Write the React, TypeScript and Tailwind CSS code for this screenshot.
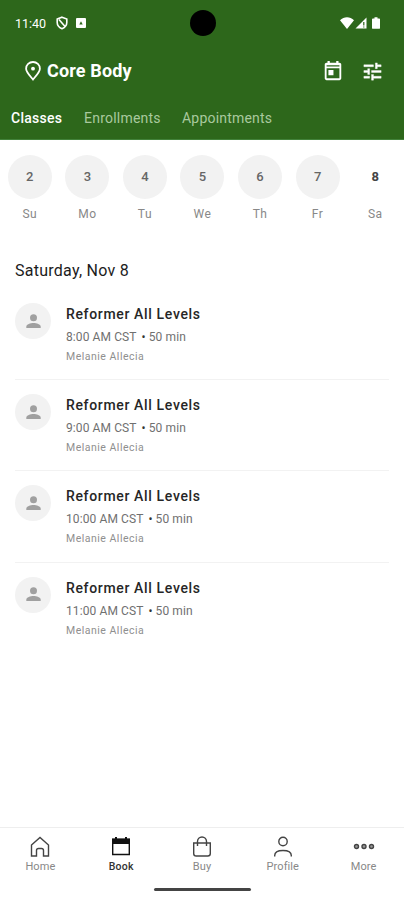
import type { ReactNode } from 'react';

interface ClassItem {
  name: string;
  time: string;
  duration: string;
  instructor: string;
}

const days = [
  { date: '2', label: 'Su' },
  { date: '3', label: 'Mo' },
  { date: '4', label: 'Tu' },
  { date: '5', label: 'We' },
  { date: '6', label: 'Th' },
  { date: '7', label: 'Fr' },
  { date: '8', label: 'Sa' },
];

const classes: ClassItem[] = ['8:00', '9:00', '10:00', '11:00'].map((t) => ({
  name: 'Reformer All Levels',
  time: `${t} AM CST`,
  duration: '50 min',
  instructor: 'Melanie Allecia',
}));

function StatusBar() {
  return (
    <div className="relative flex h-[46px] items-center justify-between pl-[15px] pr-[24px] text-white">
      <div className="flex items-center">
        <span className="w-[32px] whitespace-nowrap pt-px text-[12.5px] leading-4">11:40</span>
        <svg className="ml-[9px]" width="12" height="14" viewBox="0 0 12 14" fill="none" stroke="currentColor" strokeWidth="1.6">
          <path d="M6 1.2 10.8 3v3.6c0 2.9-2 5-4.8 6.1C3.2 11.6 1.2 9.5 1.2 6.6V3z" />
          <path d="m3 3.5 6 7" />
        </svg>
        <svg className="ml-[8px]" width="10" height="10" viewBox="0 0 10 10">
          <rect width="10" height="10" rx="1" fill="currentColor" />
          <path d="M5 3.2 6.7 6.5H3.3z" fill="#2d671b" />
        </svg>
      </div>
      <div className="flex items-center">
        <svg width="14" height="12" viewBox="0 0 14 12" fill="currentColor">
          <path d="M0 3.2C4-.7 10-.7 14 3.2L7 12z" />
        </svg>
        <svg className="ml-px" width="12" height="12" viewBox="0 0 12 12">
          <path d="M11.5.5v11H.5z" fill="currentColor" />
          <path d="M8.800 5v3.500M8.800 9.500v1" stroke="#2d671b" strokeWidth="1.2" />
        </svg>
        <svg className="ml-[5px]" width="8" height="12" viewBox="0 0 9 13" fill="currentColor">
          <path d="M2.800 0h3.400v1.300H8c.5 0 1 .4 1 1V12c0 .6-.5 1-1 1H1c-.5 0-1-.4-1-1V2.300c0-.6.5-1 1-1h1.800z" />
        </svg>
      </div>
      <div className="absolute left-[190px] top-[10px] h-[26px] w-[26px] rounded-full bg-black" />
    </div>
  );
}

function Header() {
  return (
    <header className="h-[140px] shrink-0 border-b border-[#42823a] bg-[#2d671b]">
      <StatusBar />
      <div className="flex h-[50px] items-center pl-[25px] pr-[20px] text-white">
        <svg width="16" height="20" viewBox="0 0 16 20" fill="none" stroke="currentColor" strokeWidth="1.8">
          <path d="M8 18.500C5 14.900 1.100 11 1.100 7.700a6.900 6.700 0 0 1 13.800 0C14.900 11 11 14.900 8 18.500z" />
          <circle cx="8" cy="7.7" r="1.9" fill="currentColor" stroke="none" />
        </svg>
        <h1 className="ml-[6px] whitespace-nowrap text-[18px] font-bold leading-6 tracking-[0.14px]">Core Body</h1>
        <svg className="ml-auto" width="22" height="22" viewBox="0 0 24 24" fill="currentColor">
          <path d="M19 3h-1V1h-2.500v2h-7V1H6v2H5c-1.100 0-2 .9-2 2v15c0 1.100.9 2 2 2h14c1.100 0 2-.9 2-2V5c0-1.100-.9-2-2-2zm0 17H5V9h14v11zM5 7V5.800h14V7zM7 11h5.500v5.500H7z" />
        </svg>
        <svg className="ml-[17px]" width="23" height="23" viewBox="0 0 24 24" fill="currentColor" stroke="currentColor" strokeWidth="0.4">
          <path d="M3 17v2h6v-2H3zM3 5v2h10V5H3zm10 16v-2h8v-2h-8v-2h-2v6h2zM7 9v2H3v2h4v2h2V9H7zm14 4v-2H11v2h10zm-6-4h2V7h4V5h-4V3h-2v6z" />
        </svg>
      </div>
      <nav className="flex h-[44px] items-center pl-[11px] pt-px text-[14px] text-[#a9c99e]">
        <span className="w-[73px] font-medium tracking-[0.25px] text-white">Classes</span>
        <span className="w-[98px] tracking-[0.22px]">Enrollments</span>
        <span className="tracking-[0.2px]">Appointments</span>
      </nav>
    </header>
  );
}

function DayPicker() {
  return (
    <div className="grid shrink-0 grid-cols-7 pl-px pt-[15px]">
      {days.map((day) => (
        <div key={day.date} className="flex flex-col items-center">
          <div
            className={
              day.date === '8'
                ? 'flex size-11 items-center justify-center text-[13px] font-bold text-[#444]'
                : 'flex size-11 items-center justify-center rounded-full bg-[#f2f2f2] text-[13px] font-medium text-[#666]'
            }
          >
            {day.date}
          </div>
          <span className="mt-[7px] text-[12px] leading-4 tracking-[0.5px] text-[#888]">{day.label}</span>
        </div>
      ))}
    </div>
  );
}

function ClassRow({ item }: { item: ClassItem }) {
  return (
    <li className="flex h-[91.2px] border-b border-[#f2f2f2] pt-[14px] last:border-transparent">
      <div className="flex size-9 shrink-0 items-center justify-center rounded-full bg-[#f2f2f2]">
        <svg width="15" height="15" viewBox="0 0 15 15" fill="#a0a0a0">
          <circle cx="7.5" cy="3.7" r="3.5" />
          <path d="M.3 14v-1.300C.3 10.200 4.500 9 7.500 9s7.200 1.200 7.200 3.700V14z" />
        </svg>
      </div>
      <div className="ml-[15px] whitespace-nowrap pt-px">
        <p className="text-[14px] font-medium leading-5 tracking-[0.65px] text-[#262626]">{item.name}</p>
        <p className="mt-[5px] flex text-[12px] leading-4 tracking-[0.1px] text-[#707070]">
          <span>{item.time}</span>
          <span className="ml-[5px] mr-[3px] text-[#333]">•</span>
          <span>{item.duration}</span>
        </p>
        <p className="mt-[4px] text-[10.5px] leading-4 tracking-[0.5px] text-[#8f8f8f]">{item.instructor}</p>
      </div>
    </li>
  );
}

function TabItem({ label, active, children }: { label: string; active?: boolean; children: ReactNode }) {
  return (
    <div className="flex flex-col items-center">
      <svg width="22" height="22" viewBox="0 0 22 22" fill="none" stroke="#444" strokeWidth="1.4">
        {children}
      </svg>
      <span
        className={
          active
            ? 'mt-px text-[10.5px] font-medium leading-4 tracking-[0.2px] text-[#333]'
            : 'mt-px text-[11px] leading-4 tracking-[0.1px] text-[#888]'
        }
      >
        {label}
      </span>
    </div>
  );
}

function BottomNav() {
  return (
    <footer className="h-[73px] shrink-0 border-t border-[#eee]">
      <div className="grid grid-cols-5 pt-[8px]">
        <TabItem label="Home">
          <path d="M2.500 9 11 1.500 19.500 9v11h-5v-5.500a2 2 0 0 0-2-2h-3a2 2 0 0 0-2 2V20h-5z" />
        </TabItem>
        <TabItem label="Book" active>
          <path d="M2.700 3.500h16.600v15H2.700z" stroke="#111" />
          <path d="M2 2.500h18V8H2zM5 1h2v3H5zM15 1h2v3h-2z" fill="#111" stroke="none" />
        </TabItem>
        <TabItem label="Buy">
          <path d="M2.700 7h16.600v10.500a2.500 2.500 0 0 1-2.500 2.500H5.200a2.500 2.500 0 0 1-2.500-2.500z" />
          <path d="M6.500 10V5.500a4.500 4.500 0 0 1 9 0V10" />
        </TabItem>
        <TabItem label="Profile">
          <circle cx="11" cy="5.5" r="4.2" />
          <path d="M2.700 20.500v-1c0-3.500 3-5 8.300-5s8.300 1.500 8.300 5v1" />
        </TabItem>
        <TabItem label="More">
          <circle cx="3.5" cy="10.5" r="2" fill="#999" />
          <circle cx="11" cy="10.5" r="2" fill="#999" />
          <circle cx="18.5" cy="10.5" r="2" fill="#999" />
        </TabItem>
      </div>
      <div className="mx-auto mt-[13px] h-[3px] w-[97px] rounded-full bg-[#444]" />
    </footer>
  );
}

export default function App() {
  return (
    <div className="flex h-[900px] w-[404px] flex-col overflow-hidden bg-white font-['Roboto',sans-serif]">
      <Header />
      <DayPicker />
      <main className="flex-1 px-[15px]">
        <h2 className="mt-[37px] text-[16px] leading-6 tracking-[0.25px] text-[#1c1c1c]">Saturday, Nov 8</h2>
        <ul className="mt-[6px]">
          {classes.map((item) => (
            <ClassRow key={item.time} item={item} />
          ))}
        </ul>
      </main>
      <BottomNav />
    </div>
  );
}
